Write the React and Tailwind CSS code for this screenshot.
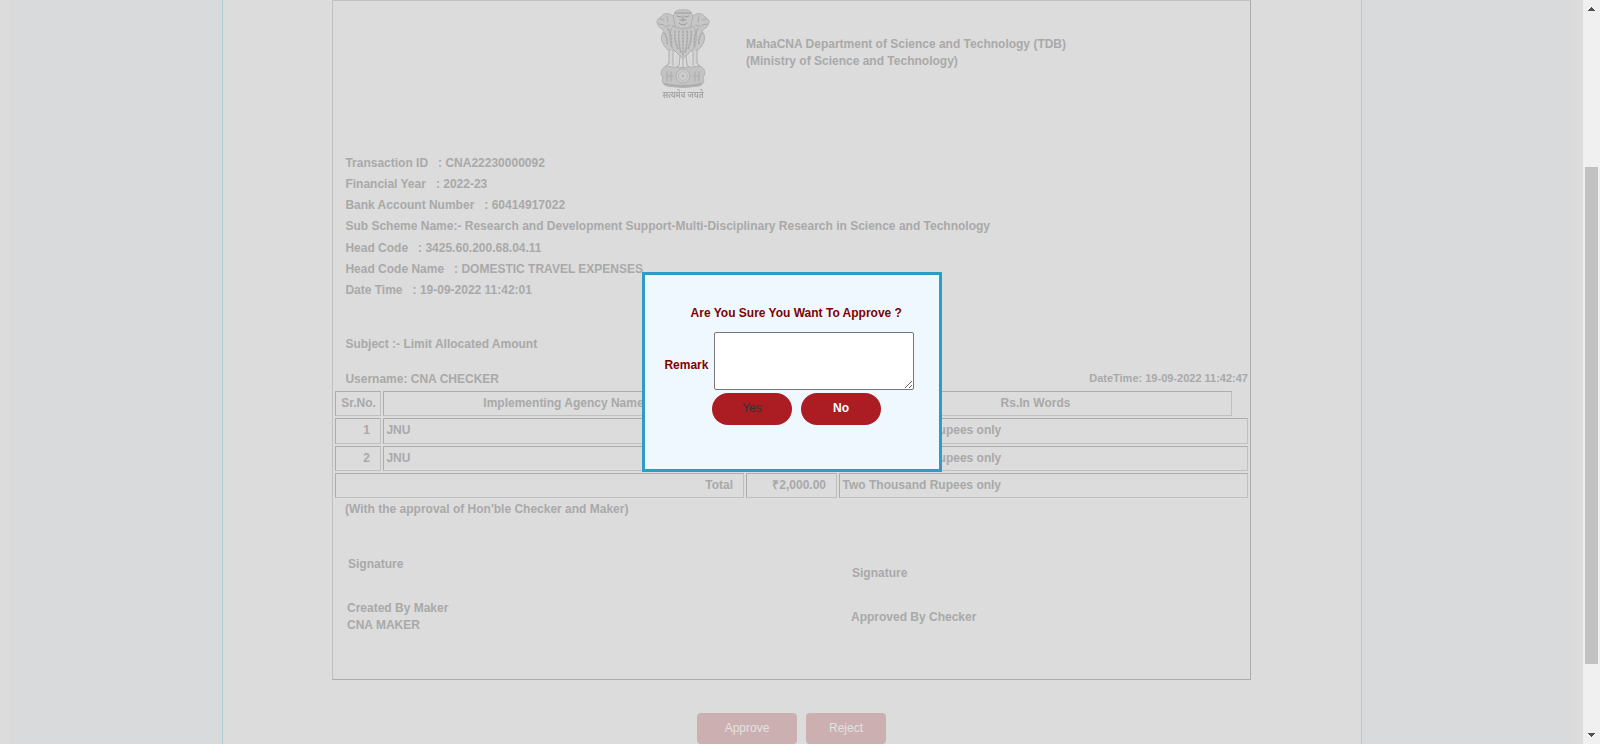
const details = [
  ["Transaction ID", "CNA22230000092"],
  ["Financial Year", "2022-23"],
  ["Bank Account Number", "60414917022"],
];

const headDetails = [
  ["Head Code", "3425.60.200.68.04.11"],
  ["Head Code Name", "DOMESTIC TRAVEL EXPENSES"],
  ["Date Time", "19-09-2022 11:42:01"],
];

function Detail({ label, value }) {
  return (
    <p className="h-[21px] whitespace-pre">
      {label}
      {"\u00a0\u00a0 : "}
      {value}
    </p>
  );
}

function Cell({ className, children }) {
  return (
    <div
      className={`border border-t-[#adadad] border-l-[#adadad] border-r-[#c0c0c0] border-b-[#c0c0c0] leading-[22px] ${className}`}
    >
      {children}
    </div>
  );
}

function Emblem() {
  return (
    <svg
      className="h-[92px] w-[56px] blur-[0.5px]"
      viewBox="0 0 56 92"
      fill="none"
      stroke="#ababab"
      strokeWidth="1"
      strokeLinecap="round"
    >
      <g fill="#c6c6c6" stroke="#b0b0b0">
        <path d="M20 4 C20 1 36 1 36 4 L38 9 C37 12 39 15 36 18 C33 21 23 21 20 18 C17 15 19 12 18 9Z" />
        <path d="M18 8 C14 4 8 5 6 9 C2 11 1 14 3 17 C4 20 8 21 9 23 C4 29 7 37 13 42 L20 43 L20 18Z" />
        <path d="M38 8 C42 4 48 5 50 9 C54 11 55 14 53 17 C52 20 48 21 47 23 C52 29 49 37 43 42 L36 43 L36 18Z" />
        <path d="M18 18 C12 26 15 39 20 43 L25 48 L28 50 L31 48 L36 43 C41 39 44 26 38 18 C35 22 21 22 18 18Z" />
      </g>
      <path d="M22 8 L26 9 M30 9 L34 8 M28 8 L28 13 M24 15 Q28 19 32 15 M25 12 L31 12 M20 5 L36 5" stroke="#999" />
      <path d="M5 11 L9 12 M4 16 L9 17 M12 8 L13 14 M51 11 L47 12 M52 16 L47 17 M44 8 L43 14 M10 19 L15 17 M46 19 L41 17" />
      <path
        d="M9 25 Q13 30 12 37 M13 21 Q18 28 16 40 M47 25 Q43 30 44 37 M43 21 Q38 28 40 40 M20 23 Q19 32 23 41 M24 23 Q23 34 26 45 M28 23 V47 M32 23 Q33 34 30 45 M36 23 Q37 32 33 41"
        stroke="#aaa"
        strokeDasharray="1.5 1.8"
        strokeWidth="1.6"
      />
      <path
        d="M14 42 L14 55 L11 59 M18 44 L18 57 M25 48 L24 57 L21 60 M28 50 L28 59 M31 48 L32 57 L35 60 M38 44 L38 57 M42 42 L42 55 L45 59"
        stroke="#b4b4b4"
        strokeWidth="1.3"
      />
      <path d="M16 43 L16 56 M22 47 L21 56 M34 47 L35 56 M40 43 L40 56" stroke="#d4d4d4" strokeWidth="2" />
      <path
        d="M11 58 Q28 61 45 58 C51 61 51 67 48 69 C50 73 48 77 44 78 Q28 81 12 78 C8 77 6 73 8 69 C5 67 5 61 11 58Z"
        fill="#c3c3c3"
        stroke="#b0b0b0"
      />
      <circle cx="28" cy="68" r="7" fill="#cdcdcd" stroke="#b0b0b0" />
      <circle cx="28" cy="68" r="4.5" stroke="#b6b6b6" strokeDasharray="1 1.2" />
      <circle cx="28" cy="68" r="1.2" fill="#b0b0b0" stroke="none" />
      <path
        d="M12 64 V73 M16 64 V73 M40 64 V73 M44 64 V73 M12 68 H18 M38 68 H44"
        stroke="#b2b2b2"
        strokeWidth="1.5"
      />
      <path d="M10 76 Q28 80 46 76" stroke="#adadad" strokeWidth="1.8" />
      <text
        x="28"
        y="90"
        textAnchor="middle"
        textLength="41"
        lengthAdjust="spacingAndGlyphs"
        fill="#a9a9a9"
        stroke="none"
        fontSize="9"
        fontFamily="Noto Sans, Noto Sans Devanagari, sans-serif"
      >
        सत्यमेव जयते
      </text>
    </svg>
  );
}

function Document() {
  return (
    <section className="ml-[109px] h-[680px] w-[919px] border border-t-[#c0c0c0] border-l-[#c0c0c0] border-r-[#adadad] border-b-[#adadad]">
      <header className="flex h-[152px] pt-[7px] pl-[322px]">
        <Emblem />
        <div className="mt-[28px] ml-[35px] leading-[17px]">
          <p>MahaCNA Department of Science and Technology (TDB)</p>
          <p>(Ministry of Science and Technology)</p>
        </div>
      </header>
      <div className="pl-[12.4px] leading-[21px]">
        {details.map(([label, value]) => (
          <Detail key={label} label={label} value={value} />
        ))}
        <p className="h-[22px]">
          Sub Scheme Name:- Research and Development Support-Multi-Disciplinary Research in Science and Technology
        </p>
        {headDetails.map(([label, value]) => (
          <Detail key={label} label={label} value={value} />
        ))}
        <p className="mt-[33px]">Subject :- Limit Allocated Amount</p>
      </div>
      <div className="mt-[14px] flex h-[22px] justify-between pr-[2px] pl-[12.4px] leading-[21px]">
        <p>Username: CNA CHECKER</p>
        <p className="text-[11px] leading-[19px]">DateTime: 19-09-2022 11:42:47</p>
      </div>
      <div className="ml-[2px] flex w-[913px] flex-col gap-[2px]">
        <div className="flex h-[25px] gap-[2px] text-center">
          <Cell className="w-[46px] pl-px">Sr.No.</Cell>
          <Cell className="w-[361px]">Implementing Agency Name</Cell>
          <Cell className="w-[91px]">Amount</Cell>
          <Cell className="w-[393px]">Rs.In Words</Cell>
        </div>
        <div className="flex h-[26px] gap-[2px]">
          <Cell className="w-[46px] pr-[10px] text-right">1</Cell>
          <Cell className="w-[361px] pl-[2.4px]">JNU</Cell>
          <Cell className="w-[91px] pr-[10px] text-right">₹1,000.00</Cell>
          <Cell className="w-[409px] pl-[2.6px]">One Thousand Rupees only</Cell>
        </div>
        <div className="flex h-[25px] gap-[2px]">
          <Cell className="w-[46px] pr-[10px] text-right">2</Cell>
          <Cell className="w-[361px] pl-[2.4px]">JNU</Cell>
          <Cell className="w-[91px] pr-[10px] text-right">₹1,000.00</Cell>
          <Cell className="w-[409px] pl-[2.6px]">One Thousand Rupees only</Cell>
        </div>
        <div className="flex h-[25px] gap-[2px]">
          <Cell className="w-[409px] pr-[10px] text-right">Total</Cell>
          <Cell className="w-[91px] pr-[10px] text-right">₹2,000.00</Cell>
          <Cell className="w-[409px] pl-[2.6px]">Two Thousand Rupees only</Cell>
        </div>
      </div>
      <p className="mt-px pl-[12px] leading-[21px]">(With the approval of Hon'ble Checker and Maker)</p>
      <div className="flex leading-[17px]">
        <div className="w-[503px] pt-[36px] pl-[14px]">
          <p className="pl-px">Signature</p>
          <p className="mt-[27px]">Created By Maker</p>
          <p>CNA MAKER</p>
        </div>
        <div className="pt-[45px] pl-[15px]">
          <p className="pl-px">Signature</p>
          <p className="mt-[27px]">Approved By Checker</p>
        </div>
      </div>
    </section>
  );
}

function ApproveDialog() {
  return (
    <div className="absolute top-[272px] left-[642px] h-[200px] w-[300px] border-[3px] border-[#2e9cc8] bg-[#f0f8ff] text-[#800000]">
      <p className="mt-[29px] ml-[45.6px] leading-[18px]">Are You Sure You Want To Approve ?</p>
      <div className="mt-[10px] ml-[19.4px] flex">
        <label className="w-[49.6px] pt-[24px] leading-[18px]" htmlFor="remark">
          Remark
        </label>
        <textarea id="remark" className="h-[58px] w-[200px] resize rounded-[2px] border border-[#767676] bg-white" />
      </div>
      <div className="mt-[3px] ml-[67px] flex gap-[9px]">
        <button className="h-[32px] w-[80px] rounded-full bg-[#ab1d22] pb-[2px] font-normal text-[#333]">Yes</button>
        <button className="h-[32px] w-[80px] rounded-full bg-[#ab1d22] pb-[2px] font-bold text-white">No</button>
      </div>
    </div>
  );
}

function Scrollbar() {
  return (
    <div className="flex w-[17px] flex-col items-center bg-[#f0f0f0]">
      <svg className="h-[17px] w-[17px]" viewBox="0 0 17 17" fill="#505050" shapeRendering="crispEdges">
        <path d="M8 7h1v1h1v1h1v1h1v1h-7v-1h1v-1h1v-1h1z" />
      </svg>
      <div className="mt-[150px] h-[497px] w-[13px] bg-[#c1c1c1]" />
      <svg className="mt-auto h-[17px] w-[17px]" viewBox="0 0 17 17" fill="#505050" shapeRendering="crispEdges">
        <path d="M5 6h7v1h-1v1h-1v1h-1v1h-1v-1h-1v-1h-1v-1h-1z" />
      </svg>
    </div>
  );
}

export default function App() {
  return (
    <div className="relative flex h-[744px] w-[1600px] overflow-hidden bg-[#dcdcdc] font-['Liberation_Sans',Arial,sans-serif] text-[12px] font-bold text-[#a9a9a9]">
      <div className="ml-[10px] w-[212px] bg-[#d8dadc]" />
      <main className="w-[1140px] border-r border-l border-r-[#b2c8c8] border-l-[#aec8d2]">
        <Document />
        <div className="mt-[33px] flex gap-[9px] pl-[474px] font-normal text-[#e2e2e2]">
          <button className="h-[31px] w-[100px] rounded-[4px] bg-[#ccafb1] pb-[2px]">Approve</button>
          <button className="h-[31px] w-[80px] rounded-[4px] bg-[#ccafb1] pb-[2px]">Reject</button>
        </div>
      </main>
      <div className="mr-[11px] w-[210px] bg-[#d8dadc]" />
      <Scrollbar />
      <ApproveDialog />
    </div>
  );
}
